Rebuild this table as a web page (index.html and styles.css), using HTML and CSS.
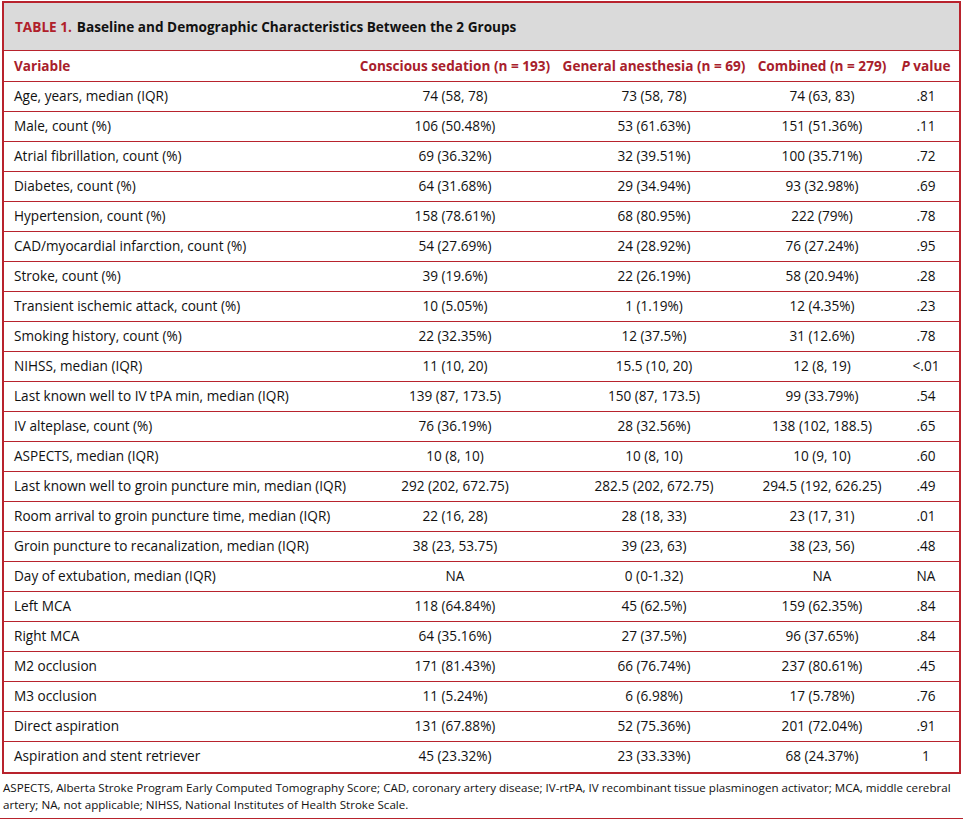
FILE: index.html
```html
<!DOCTYPE html>
<html>
<head>
<meta charset="utf-8">
<link rel="stylesheet" href="styles.css">
</head>
<body>
<div class="page">
  <div class="frame">
    <div class="title"><span class="label">TABLE 1.</span> Baseline and Demographic Characteristics Between the 2 Groups</div>
    <table class="data">
      <colgroup>
        <col class="c1"><col class="c2"><col class="c3"><col class="c4"><col class="c5">
      </colgroup>
      <thead>
        <tr><th class="var">Variable</th><th>Conscious sedation (n = 193)</th><th>General anesthesia (n = 69)</th><th>Combined (n = 279)</th><th><i>P</i> value</th></tr>
      </thead>
      <tbody>
        <tr><td>Age, years, median (IQR)</td><td>74 (58, 78)</td><td>73 (58, 78)</td><td>74 (63, 83)</td><td>.81</td></tr>
        <tr><td>Male, count (%)</td><td>106 (50.48%)</td><td>53 (61.63%)</td><td>151 (51.36%)</td><td>.11</td></tr>
        <tr><td>Atrial fibrillation, count (%)</td><td>69 (36.32%)</td><td>32 (39.51%)</td><td>100 (35.71%)</td><td>.72</td></tr>
        <tr><td>Diabetes, count (%)</td><td>64 (31.68%)</td><td>29 (34.94%)</td><td>93 (32.98%)</td><td>.69</td></tr>
        <tr><td>Hypertension, count (%)</td><td>158 (78.61%)</td><td>68 (80.95%)</td><td>222 (79%)</td><td>.78</td></tr>
        <tr><td>CAD/myocardial infarction, count (%)</td><td>54 (27.69%)</td><td>24 (28.92%)</td><td>76 (27.24%)</td><td>.95</td></tr>
        <tr><td>Stroke, count (%)</td><td>39 (19.6%)</td><td>22 (26.19%)</td><td>58 (20.94%)</td><td>.28</td></tr>
        <tr><td>Transient ischemic attack, count (%)</td><td>10 (5.05%)</td><td>1 (1.19%)</td><td>12 (4.35%)</td><td>.23</td></tr>
        <tr><td>Smoking history, count (%)</td><td>22 (32.35%)</td><td>12 (37.5%)</td><td>31 (12.6%)</td><td>.78</td></tr>
        <tr><td>NIHSS, median (IQR)</td><td>11 (10, 20)</td><td>15.5 (10, 20)</td><td>12 (8, 19)</td><td>&lt;.01</td></tr>
        <tr><td>Last known well to IV tPA min, median (IQR)</td><td>139 (87, 173.5)</td><td>150 (87, 173.5)</td><td>99 (33.79%)</td><td>.54</td></tr>
        <tr><td>IV alteplase, count (%)</td><td>76 (36.19%)</td><td>28 (32.56%)</td><td>138 (102, 188.5)</td><td>.65</td></tr>
        <tr><td>ASPECTS, median (IQR)</td><td>10 (8, 10)</td><td>10 (8, 10)</td><td>10 (9, 10)</td><td>.60</td></tr>
        <tr><td>Last known well to groin puncture min, median (IQR)</td><td>292 (202, 672.75)</td><td>282.5 (202, 672.75)</td><td>294.5 (192, 626.25)</td><td>.49</td></tr>
        <tr><td>Room arrival to groin puncture time, median (IQR)</td><td>22 (16, 28)</td><td>28 (18, 33)</td><td>23 (17, 31)</td><td>.01</td></tr>
        <tr><td>Groin puncture to recanalization, median (IQR)</td><td>38 (23, 53.75)</td><td>39 (23, 63)</td><td>38 (23, 56)</td><td>.48</td></tr>
        <tr><td>Day of extubation, median (IQR)</td><td>NA</td><td>0 (0-1.32)</td><td>NA</td><td>NA</td></tr>
        <tr><td>Left MCA</td><td>118 (64.84%)</td><td>45 (62.5%)</td><td>159 (62.35%)</td><td>.84</td></tr>
        <tr><td>Right MCA</td><td>64 (35.16%)</td><td>27 (37.5%)</td><td>96 (37.65%)</td><td>.84</td></tr>
        <tr><td>M2 occlusion</td><td>171 (81.43%)</td><td>66 (76.74%)</td><td>237 (80.61%)</td><td>.45</td></tr>
        <tr><td>M3 occlusion</td><td>11 (5.24%)</td><td>6 (6.98%)</td><td>17 (5.78%)</td><td>.76</td></tr>
        <tr><td>Direct aspiration</td><td>131 (67.88%)</td><td>52 (75.36%)</td><td>201 (72.04%)</td><td>.91</td></tr>
        <tr><td>Aspiration and stent retriever</td><td>45 (23.32%)</td><td>23 (33.33%)</td><td>68 (24.37%)</td><td>1</td></tr>
      </tbody>
    </table>
  </div>
  <p class="note">ASPECTS, Alberta Stroke Program Early Computed Tomography Score; CAD, coronary artery disease; IV-rtPA, IV recombinant tissue plasminogen activator; MCA, middle cerebral artery; NA, not applicable; NIHSS, National Institutes of Health Stroke Scale.</p>
</div>
</body>
</html>
```

FILE: styles.css
```css
html, body {
  margin: 0;
  padding: 0;
  background: #ffffff;
}
body {
  font-family: "Open Sans", "DejaVu Sans", sans-serif;
  font-size: 13.6px;
  color: #111111;
}
.page {
  width: 963px;
  height: 819px;
  box-sizing: border-box;
  padding-top: 1px;
}
.frame {
  margin: 0 2px;
  border: 2px solid #b8232d;
  height: 773px;
  box-sizing: border-box;
}
.title {
  background: #dadada;
  height: 48px;
  box-sizing: border-box;
  border-bottom: 1px solid #b8232d;
  padding-left: 11px;
  padding-bottom: 1px;
  display: flex;
  align-items: center;
  font-weight: bold;
  font-size: 13.6px;
  color: #111111;
}
.title .label {
  color: #b0202a;
  margin-right: 5px;
}
.data {
  width: 100%;
  border-collapse: collapse;
  table-layout: fixed;
}
.c1 { width: 349px; }
.c2 { width: 204px; }
.c3 { width: 194px; }
.c4 { width: 142px; }
.c5 { width: auto; }
.data th {
  color: #a8202b;
  font-weight: bold;
  font-size: 13.6px;
  height: 29px;
  padding: 0 0 1px 0;
  text-align: center;
  border-bottom: 1px solid #b8232d;
  white-space: nowrap;
}
.data th.var {
  text-align: left;
  padding-left: 10px;
}
.data td {
  height: 26px;
  padding: 0 0 3px 0;
  text-align: center;
  border-bottom: 1px solid #b8232d;
  white-space: nowrap;
}
.data td:first-child {
  text-align: left;
  padding-left: 10px;
}
.data tbody tr:last-child td {
  border-bottom: none;
}
.note {
  margin: 5px 0 0 0;
  padding: 0 3px 5px 3px;
  font-size: 11.6px;
  line-height: 17px;
  border-bottom: 2px solid #b8232d;
  color: #111111;
}
```
